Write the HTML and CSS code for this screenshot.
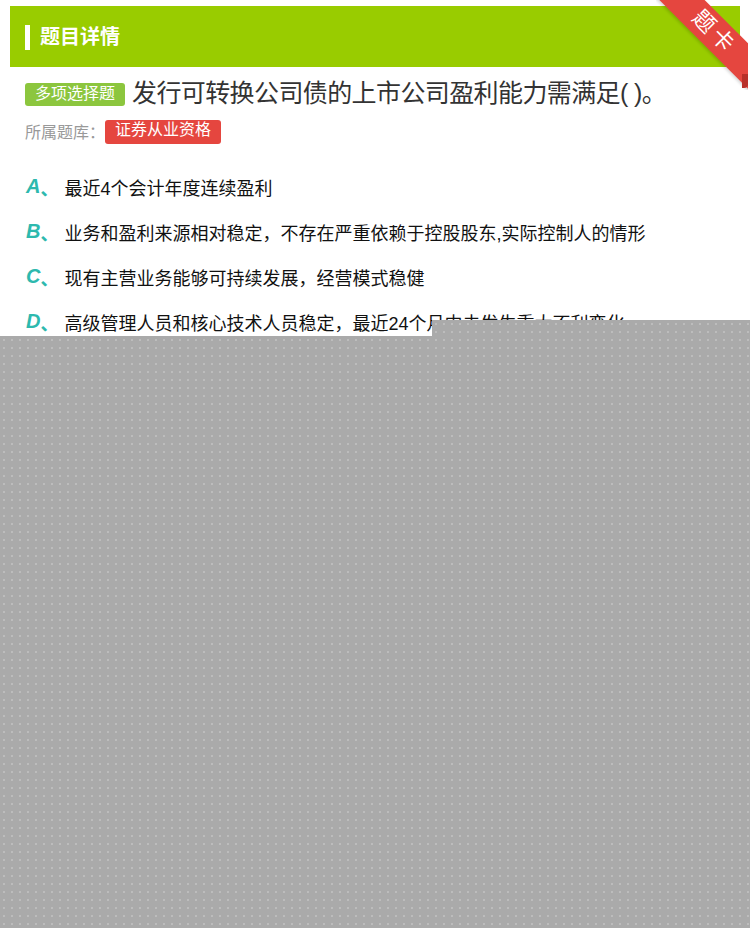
FILE: index.html
```html
<!DOCTYPE html>
<html lang="zh">
<head>
<meta charset="utf-8">
<link rel="stylesheet" href="styles.css">
</head>
<body>
<div class="page">
  <div class="header">
    <span class="bar"></span>
    <h1 class="title">题目详情</h1>
  </div>
  <div class="ribbon"><span>题卡</span></div>
  <div class="question">
    <span class="qtype">多项选择题</span><span class="qtext">发行可转换公司债的上市公司盈利能力需满足( )。</span>
  </div>
  <div class="bank">
    <span class="bank-label">所属题库：</span><span class="bank-tag">证券从业资格</span>
  </div>
  <ul class="options">
    <li class="opt"><span class="letter">A</span><span class="sep">、</span><span class="otext">最近4个会计年度连续盈利</span></li>
    <li class="opt"><span class="letter">B</span><span class="sep">、</span><span class="otext">业务和盈利来源相对稳定，不存在严重依赖于控股股东,实际控制人的情形</span></li>
    <li class="opt"><span class="letter">C</span><span class="sep">、</span><span class="otext">现有主营业务能够可持续发展，经营模式稳健</span></li>
    <li class="opt"><span class="letter">D</span><span class="sep">、</span><span class="otext">高级管理人员和核心技术人员稳定，最近24个月内未发生重大不利变化</span></li>
  </ul>
</div>
<div class="mask mask-top"></div>
<div class="mask mask-main"></div>
</body>
</html>
```

FILE: styles.css
```css
html, body {
  margin: 0;
  padding: 0;
  background: #ffffff;
}
body {
  font-family: "Liberation Sans", "Noto Sans CJK SC", sans-serif;
  width: 750px;
  height: 928px;
  overflow: hidden;
  position: relative;
}
.page {
  padding-top: 6px;
  position: relative;
}
.header {
  margin: 0 10px;
  height: 61px;
  background: #99cc00;
  display: flex;
  align-items: center;
  padding-left: 15px;
}
.bar {
  width: 5px;
  height: 25px;
  background: #ffffff;
  margin-right: 10px;
  margin-top: 1px;
}
.title {
  margin: 0 0 3px 0;
  color: #ffffff;
  font-size: 20px;
  font-weight: bold;
  letter-spacing: 0;
}
.ribbon {
  position: absolute;
  top: 0;
  right: 2px;
  width: 92px;
  height: 90px;
  overflow: hidden;
}
.ribbon span {
  position: absolute;
  top: 15px;
  left: -13px;
  width: 140px;
  height: 32px;
  line-height: 32px;
  background: #e5463f;
  color: #ffffff;
  font-size: 22px;
  text-align: center;
  transform: rotate(45deg);
  transform-origin: center;
  letter-spacing: 4px;
  text-indent: 4px;
  box-shadow: 0 2px 3px rgba(0,0,0,0.15);
}
.ribbon::after {
  content: "";
  position: absolute;
  right: 0;
  bottom: 2px;
  width: 6px;
  height: 14px;
  background: #b8302a;
  border-radius: 0 0 4px 0;
}
.question {
  display: flex;
  align-items: center;
  padding: 10px 25px 0 25px;
}
.qtype {
  background: #8cc63e;
  color: #ffffff;
  font-size: 16px;
  height: 23px;
  line-height: 22px;
  padding: 0 10px;
  border-radius: 3px;
  margin-right: 7px;
  margin-top: 2px;
}
.qtext {
  font-size: 25px;
  color: #333333;
  line-height: 32px;
  letter-spacing: -0.6px;
}
.bank {
  display: flex;
  align-items: center;
  padding: 11px 25px 0 25px;
}
.bank-label {
  font-size: 16px;
  color: #999999;
  margin-top: -2px;
}
.bank-tag {
  background: #e5463f;
  color: #ffffff;
  font-size: 16px;
  height: 24px;
  line-height: 20px;
  padding: 0 10px;
  border-radius: 3px;
  box-sizing: border-box;
}
.options {
  list-style: none;
  margin: 0;
  padding: 20px 0 0 26px;
}
.opt {
  display: flex;
  align-items: center;
  height: 45px;
}
.letter {
  color: #2db9ae;
  font-size: 20px;
  font-weight: bold;
  font-style: italic;
}
.sep {
  color: #2db9ae;
  font-size: 18px;
  font-weight: bold;
  width: 24px;
}
.otext {
  font-size: 18px;
  color: #111111;
  letter-spacing: 0;
}
.mask {
  position: absolute;
  background-color: #aaaaaa;
  background-image: radial-gradient(circle, rgba(200,200,200,0.6) 0.7px, transparent 1px);
  background-size: 8px 8px;
}
.mask-top {
  left: 432px;
  top: 320px;
  right: 0;
  height: 16px;
}
.mask-main {
  left: 0;
  top: 336px;
  right: 0;
  bottom: 0;
}
```
